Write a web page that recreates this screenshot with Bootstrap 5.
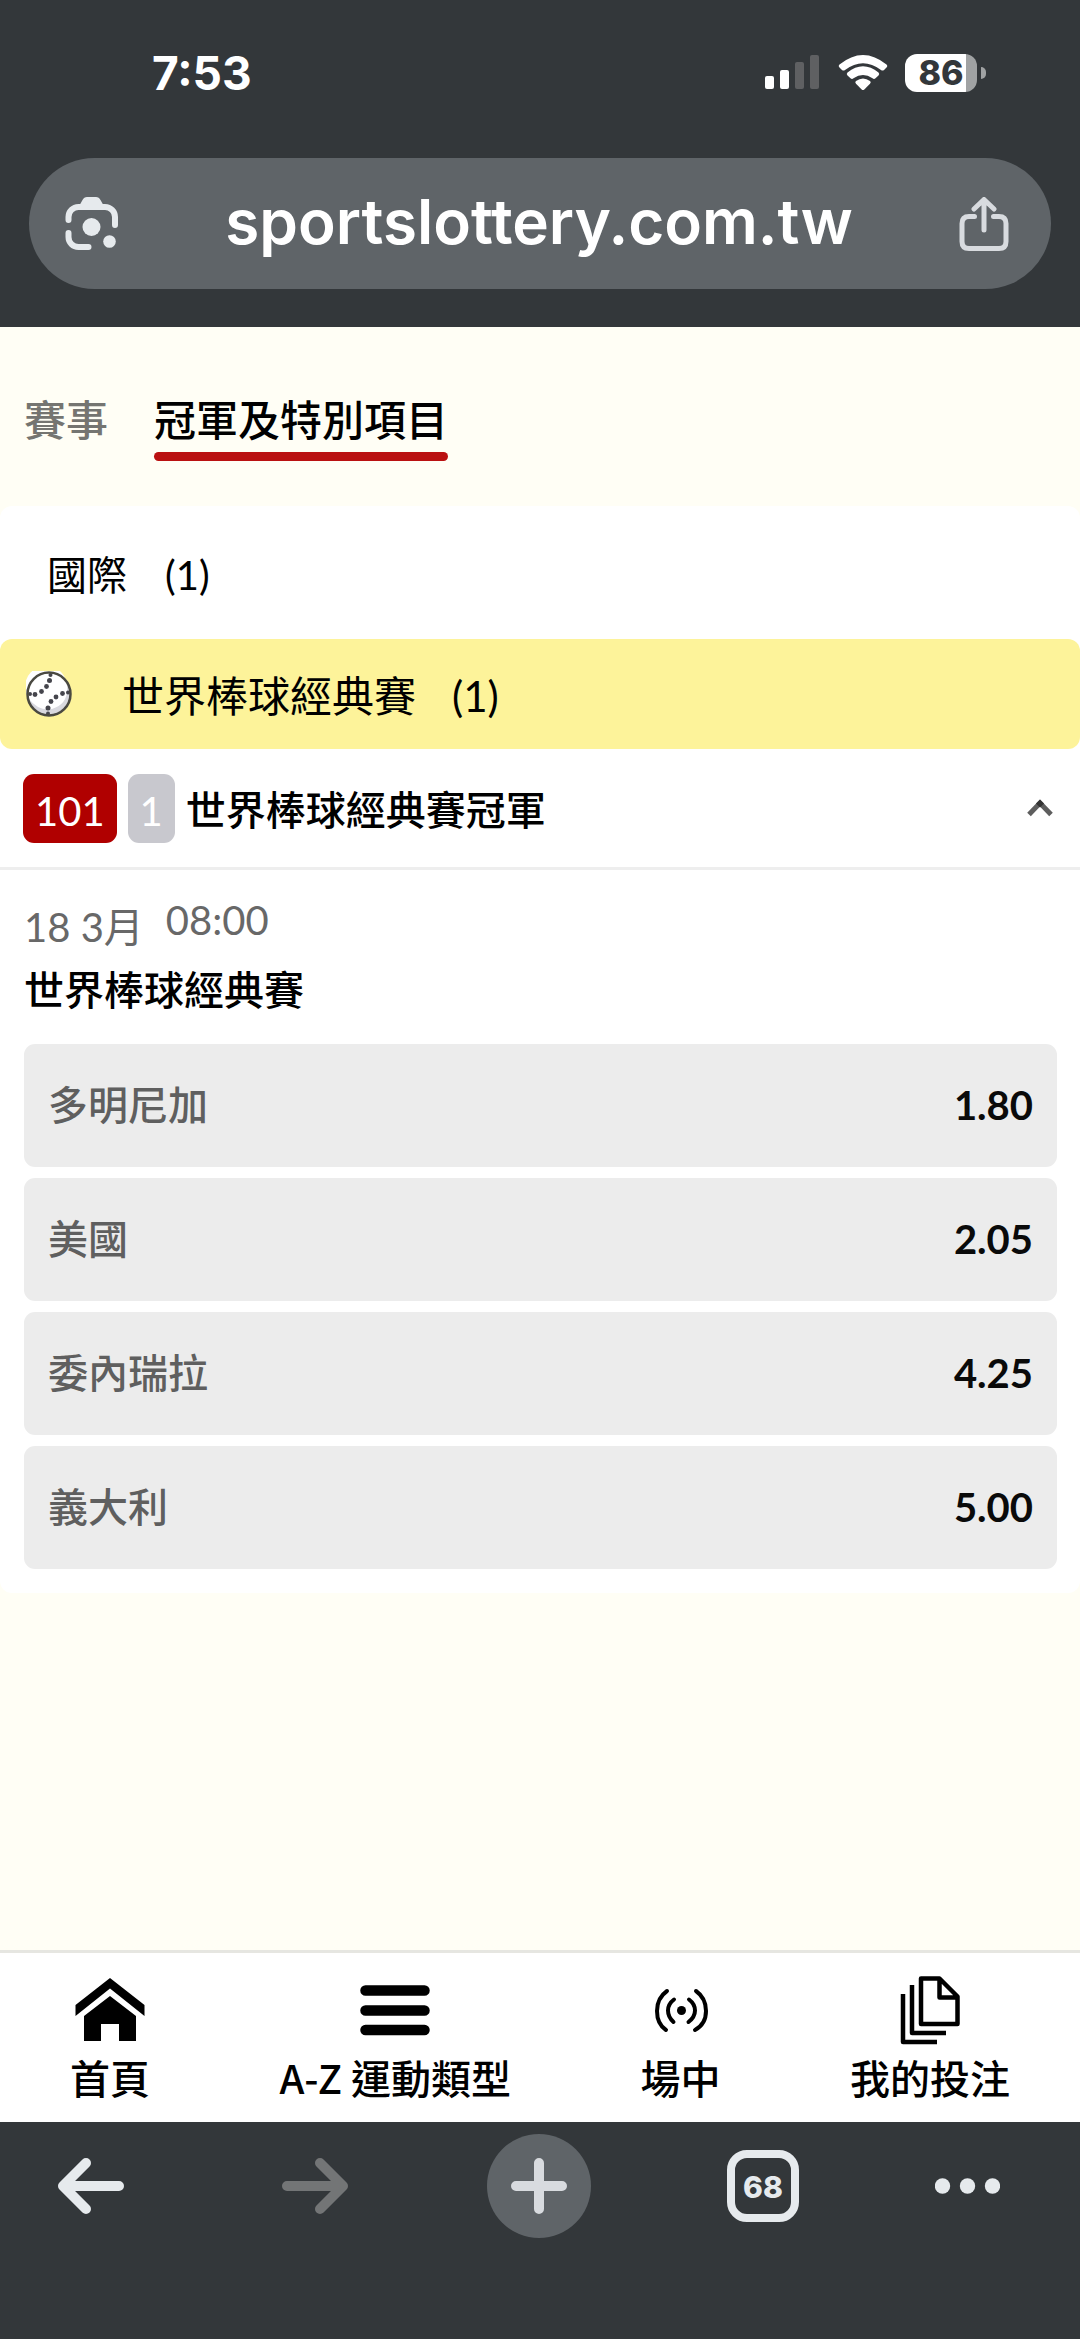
<!DOCTYPE html>
<html lang="zh-Hant">
<head>
<meta charset="utf-8">
<meta name="viewport" content="width=device-width, initial-scale=1">
<title>sportslottery.com.tw</title>
<link href="https://cdn.jsdelivr.net/npm/bootstrap@5.3.0/dist/css/bootstrap.min.css" rel="stylesheet">
<style>
  :root { --chrome: #33373a; --chrome-soft: #5f6468; --ink-light: #e6eaed; }
  body { font-family: Lato, "Noto Sans CJK TC", sans-serif; font-size: 40px; line-height: 58px; color: #000; background: #fffef5; }
  svg { display: block; flex: none; }
  button { font: inherit; color: inherit; }
  .chrome-area { background: var(--chrome); color: #fff; font-family: Inter, "Liberation Sans", sans-serif; }
  .status { height: 146px; padding: 0 94px 0 152px; }
  .clock { font-size: 46px; font-weight: 700; }
  .status-icons { gap: 17px; }
  .battery { width: 72px; height: 38px; border-radius: 12px; background: linear-gradient(90deg, #fff 85%, #a0a2a3 85%); color: var(--chrome); font-size: 34px; line-height: 38px; font-weight: 800; }
  .battery-tip { width: 5px; height: 12px; border-radius: 0 6px 6px 0; background: #a0a2a3; }
  .address-wrap { padding: 12px 29px 38px; }
  .address { height: 131px; border-radius: 66px; background: var(--chrome-soft); padding: 0 42px 0 36px; }
  .address input { min-width: 0; background: none; color: #fff; font-size: 62px; font-weight: 600; line-height: 80px; margin-bottom: 4px; }
  .plain { background: none; border: 0; padding: 0; }
  .tabs { gap: 46px; padding: 64px 24px 45px; font-size: 42px; }
  .tabs a { color: #757571; font-weight: 500; text-decoration: none; padding-bottom: 12px; }
  .tabs a.active { color: #000; position: relative; }
  .tabs a.active::after { content: ""; position: absolute; left: 0; right: 0; bottom: 0; height: 9px; border-radius: 5px; background: #ba1111; }
  .panel { background: #fff; border-radius: 12px; padding-bottom: 24px; }
  .region { height: 133px; padding: 4px 47px 0; gap: 38px; }
  .league { height: 110px; padding: 0 26px; background: #fdf39a; border-radius: 12px; font-size: 42px; }
  .league-name { margin: 0 36px 0 50px; }
  .league span { padding-top: 3px; }
  .market { height: 121px; padding: 0 26px 0 23px; border-bottom: 3px solid #eeeeee; gap: 11px; }
  .market-name { font-weight: 500; padding-top: 4px; }
  .tag { height: 69px; line-height: 74px; padding: 0 12px; border-radius: 11px; color: #fff; }
  .tag-id { background: #b00000; }
  .tag-count { background: #c8c8ce; }
  .event { padding: 26px 23px 0 24px; line-height: normal; }
  .event-when { color: #686868; gap: 22px; }
  .event h2 { font-size: 40px; line-height: 58px; font-weight: 500; margin: 7px 0 25px; }
  .odds { gap: 11px; }
  .odd { height: 123px; border-radius: 11px; background: #ececec; padding: 0 24px 2px; line-height: 58px; color: #5f5f5f; font-weight: 500; }
  .odd strong { color: #0a0a0a; font-weight: 700; }
  .site-nav { height: 172px; border-top: 3px solid #e6e6e1; background: #fff; padding: 0 70px; }
  .site-nav a { color: #000; text-decoration: none; font-family: "Noto Sans CJK TC", sans-serif; font-weight: 500; padding-top: 21px; }
  .site-nav a span { margin-top: 2px; }
  .browser-nav { height: 217px; padding: 12px 80px 0 39px; }
  .key { width: 104px; height: 104px; }
  .key-last { width: 65px; height: 104px; }
  .key-plus { border-radius: 50%; background: var(--chrome-soft); }
  .tab-count { width: 72px; height: 72px; border: 8px solid var(--ink-light); border-radius: 20px; color: var(--ink-light); font-size: 30px; line-height: 58px; font-weight: 800; }
</style>
<script src="https://cdn.jsdelivr.net/npm/bootstrap@5.3.0/dist/js/bootstrap.bundle.min.js"></script>
</head>
<body class="min-vh-100 d-flex flex-column">

<header class="chrome-area">
  <div class="status d-flex align-items-center justify-content-between">
    <span class="clock">7:53</span>
    <div class="status-icons d-flex align-items-center">
      <svg width="58" height="36" viewBox="0 0 58 36" aria-hidden="true">
        <rect x="2" y="21" width="9" height="13" rx="2" fill="#fff"/><rect x="17" y="15" width="9" height="19" rx="2" fill="#fff"/>
        <rect x="32" y="7" width="9" height="27" rx="2" fill="#5f6062"/><rect x="47" y="0" width="9" height="34" rx="2" fill="#5f6062"/>
      </svg>
      <svg width="50" height="36" viewBox="0 0 50 36" aria-hidden="true" fill="#fff">
        <path d="M1.5 9.500Q25-9.500 48.500 9.500Q50 11 48.500 12.500L46 15Q44.500 16.200 43 15Q25 1.500 7 15Q5.500 16.200 4 15L1.500 12.500Q0 11 1.500 9.500Z"/>
        <path d="M9.500 17.500Q25 5 40.500 17.500Q42 19 40.500 20.500L37.500 23.300Q36 24.500 34.500 23.300Q25 16.500 15.500 23.300Q14 24.500 12.500 23.300L9.500 20.500Q8 19 9.500 17.500Z"/>
        <path d="M18 26Q25 21 32 26Q33.500 27.300 32 28.800L26.300 34.500Q25 35.700 23.700 34.500L18 28.800Q16.500 27.300 18 26Z"/>
      </svg>
      <div class="d-flex align-items-center gap-1">
        <span class="battery text-center">86</span>
        <span class="battery-tip"></span>
      </div>
    </div>
  </div>
  <div class="address-wrap">
    <div class="address d-flex align-items-center">
      <button class="plain" type="button" aria-label="Lens">
        <svg width="54" height="54" viewBox="0 0 54 54" fill="none" stroke="#e6eaed" stroke-width="6" stroke-linecap="round">
          <path d="M3.500 23V20A10 10 0 0 1 13.500 10H40A10 10 0 0 1 50 20V28"/>
          <path d="M3.500 36V40A10 10 0 0 0 13.500 50H23.500"/>
          <path d="M13 11L17.500 3Q19 0 22 0H31Q34 0 35.500 3L40 11Z" fill="#e6eaed" stroke="none"/>
          <circle cx="26.500" cy="30" r="9" fill="#e6eaed" stroke="none"/><circle cx="44.500" cy="44.500" r="6.300" fill="#e6eaed" stroke="none"/>
        </svg>
      </button>
      <input class="flex-grow-1 border-0 p-0 text-center" type="text" aria-label="Address" value="sportslottery.com.tw">
      <button class="plain" type="button" aria-label="Share">
        <svg width="50" height="54" viewBox="0 0 50 54" fill="none" stroke="#d8dbdf" stroke-width="5" stroke-linecap="round" stroke-linejoin="round">
          <path d="M15.500 19.500H10Q3 19.500 3 26.500V44.500Q3 51.500 10 51.500H40Q47 51.500 47 44.500V26.500Q47 19.500 40 19.500H34.500"/>
          <path d="M25 33V3M15 12L25 2.500L35 12"/>
        </svg>
      </button>
    </div>
  </div>
</header>

<main class="flex-grow-1">
  <nav class="tabs d-flex">
    <a href="#">賽事</a>
    <a href="#" class="active" aria-current="page">冠軍及特別項目</a>
  </nav>

  <section class="panel">
    <div class="region d-flex align-items-center"><span>國際</span><span>(1)</span></div>
    <div class="league d-flex align-items-center">
      <svg width="46" height="46" viewBox="0 0 46 46" aria-hidden="true">
        <circle cx="23" cy="23" r="21.500" fill="#d9d9df"/>
        <path d="M3 28A21 21 0 1 1 41 14Q43 33 26 38Q12 40 3 28Z" fill="#fff"/>
        <g fill="#45454c"><circle cx="24.500" cy="4" r="2"/><circle cx="23.500" cy="9.500" r="2.500"/><circle cx="20.500" cy="15.500" r="2.400"/><circle cx="15.500" cy="20.500" r="2.400"/><circle cx="9" cy="23.500" r="2.400"/><circle cx="4" cy="23" r="2"/>
        <circle cx="42" cy="21.500" r="2"/><circle cx="36.500" cy="22.500" r="2.400"/><circle cx="30" cy="26" r="2.400"/><circle cx="25" cy="30.500" r="2.400"/><circle cx="22" cy="37" r="2.500"/><circle cx="22" cy="42.500" r="2"/></g>
        <circle cx="23" cy="23" r="21.500" fill="none" stroke="#4a4941" stroke-width="2.500"/>
      </svg>
      <span class="league-name">世界棒球經典賽</span><span>(1)</span>
    </div>
    <div class="market d-flex align-items-center">
      <span class="tag tag-id">101</span>
      <span class="tag tag-count">1</span>
      <span class="market-name flex-grow-1">世界棒球經典賽冠軍</span>
      <button class="plain" type="button" aria-label="收合">
        <svg width="28" height="20" viewBox="0 0 28 20" fill="none" stroke="#5e5e5e" stroke-width="5"><path d="M3 16.500L14 5L25 16.500"/><path d="M10 5.500L14 1.500L18 5.500L14 9.500Z" fill="#333" stroke="none"/></svg>
      </button>
    </div>
    <div class="event">
      <div class="event-when d-flex align-items-start"><span>18 3月</span><time>08:00</time></div>
      <h2>世界棒球經典賽</h2>
      <div class="odds d-flex flex-column">
        <button type="button" class="odd border-0 d-flex align-items-center justify-content-between"><span>多明尼加</span><strong>1.80</strong></button>
        <button type="button" class="odd border-0 d-flex align-items-center justify-content-between"><span>美國</span><strong>2.05</strong></button>
        <button type="button" class="odd border-0 d-flex align-items-center justify-content-between"><span>委內瑞拉</span><strong>4.25</strong></button>
        <button type="button" class="odd border-0 d-flex align-items-center justify-content-between"><span>義大利</span><strong>5.00</strong></button>
      </div>
    </div>
  </section>
</main>

<nav class="site-nav d-flex justify-content-between">
  <a href="#" class="d-flex flex-column align-items-center">
    <svg width="70" height="72" viewBox="0 0 70 72"><path d="M35 4L69.500 31V42L35 14.500L0.500 42V31Z"/><path d="M35 22L61 42V67H44V50H26V67H9V42Z"/></svg>
    <span>首頁</span>
  </a>
  <a href="#" class="d-flex flex-column align-items-center">
    <svg width="70" height="72" viewBox="0 0 70 72" stroke="#000" stroke-width="10.500" stroke-linecap="round"><path d="M5.500 16.500H64.500M5.500 36.500H64.500M5.500 56H64.500"/></svg>
    <span>A-Z 運動類型</span>
  </a>
  <a href="#" class="d-flex flex-column align-items-center">
    <svg width="54" height="72" viewBox="0 0 54 72" fill="none" stroke="#000" stroke-width="4" stroke-linecap="round"><path d="M13 17Q3 24 3 37T12 56M42 17Q52 24 52 37T41 56M20 25.500Q14 30 14 36.500T19.500 48M35 25.500Q41 30 41 36.500T34.500 48"/><circle cx="27.500" cy="36.500" r="4.500" fill="#000" stroke="none"/></svg>
    <span>場中</span>
  </a>
  <a href="#" class="d-flex flex-column align-items-center">
    <svg width="60" height="72" viewBox="0 0 60 72" fill="none" stroke="#000" stroke-width="4.500" stroke-linejoin="round"><path d="M21 4.500H39.500L57.500 22.500V50H21ZM39.500 4.500V23.500H57.500"/><path d="M12 11V59H46M3 20V68H37"/></svg>
    <span>我的投注</span>
  </a>
</nav>

<footer class="chrome-area browser-nav d-flex align-items-start justify-content-between">
  <button type="button" class="plain key d-flex align-items-center justify-content-center" aria-label="Back">
    <svg width="68" height="58" viewBox="0 0 68 58" fill="none" stroke="#e6eaed" stroke-width="10" stroke-linecap="round" stroke-linejoin="round"><path d="M62 29H7M29 6L6 29L29 52"/></svg>
  </button>
  <button type="button" class="plain key d-flex align-items-center justify-content-center" aria-label="Forward">
    <svg width="68" height="58" viewBox="0 0 68 58" fill="none" stroke="#737576" stroke-width="10" stroke-linecap="round" stroke-linejoin="round"><path d="M6 29H61M39 6L62 29L39 52"/></svg>
  </button>
  <button type="button" class="plain key key-plus d-flex align-items-center justify-content-center" aria-label="New tab">
    <svg width="56" height="56" viewBox="0 0 56 56" stroke="#d8dbdf" stroke-width="10" stroke-linecap="round"><path d="M28 5V51M5 28H51"/></svg>
  </button>
  <button type="button" class="plain key d-flex align-items-center justify-content-center" aria-label="Tabs">
    <span class="tab-count text-center">68</span>
  </button>
  <button type="button" class="plain key-last d-flex align-items-center justify-content-center" aria-label="More">
    <svg width="65" height="20" viewBox="0 0 65 20" fill="#e6eaed"><circle cx="7.500" cy="10" r="7.700"/><circle cx="32.500" cy="10" r="7.700"/><circle cx="57.500" cy="10" r="7.700"/></svg>
  </button>
</footer>

</body>
</html>
